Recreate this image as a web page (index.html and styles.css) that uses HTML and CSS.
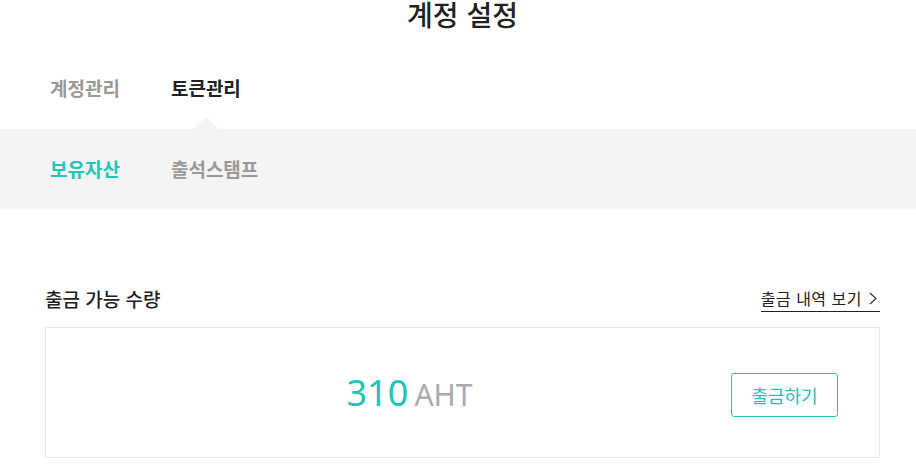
FILE: index.html
```
<!DOCTYPE html>
<html lang="ko">
<head>
    <meta charset="UTF-8">
    <meta name="viewport" content="width=device-width, initial-scale=1.0">
    <title>계정 설정</title>
    <link rel="stylesheet" href="styles.css">
</head>
<body>

<div class="container">
    <h1 class="page-title">계정 설정</h1>
    <ul class="tabs">
        <li class="tab">계정관리</li>
        <li class="tab active">토큰관리</li>
    </ul>
</div>

<div class="sub-band">
    <ul class="container sub-tabs">
        <li class="sub-tab active">보유자산</li>
        <li class="sub-tab">출석스탬프</li>
    </ul>
</div>

<div class="container section">
    <div class="section-head">
        <h2>출금 가능 수량</h2>
        <a class="history-link" href="#">출금 내역 보기
            <svg width="8" height="13" viewBox="0 0 8 13"><polyline points="1,1 7,6.5 1,12" fill="none" stroke="#333" stroke-width="1.2"/></svg>
        </a>
    </div>
    <div class="amount-box">
        <div class="amount"><span class="num">310</span> <span class="unit">AHT</span></div>
        <button class="withdraw-btn">출금하기</button>
    </div>
</div>

</body>
</html>
```

FILE: styles.css
```
body {
    margin: 0;
    font-family: "Noto Sans CJK KR", "Noto Sans", sans-serif;
    color: #222;
    background: #fff;
}

ul {
    list-style: none;
    margin: 0;
    padding: 0;
}

.container {
    width: 835px;
    margin: 0 36px 0 45px;
}

/* Title */
.page-title {
    margin: -3px 0 0;
    height: 34px;
    line-height: 34px;
    font-size: 28px;
    font-weight: 500;
    text-align: center;
    color: #222;
}

/* Main tabs */
.tabs {
    display: flex;
    gap: 51px;
    padding: 44px 0 28px 5px;
}

.tab {
    position: relative;
    line-height: 26px;
    font-size: 19px;
    font-weight: 700;
    color: #999;
}

.tab.active {
    color: #222;
}

.tab.active::after {
    content: "";
    position: absolute;
    left: 50%;
    top: 100%;
    margin: 16px 0 0 -13px;
    border-left: 13px solid transparent;
    border-right: 13px solid transparent;
    border-bottom: 12px solid #f4f4f4;
}

/* Sub tabs */
.sub-band {
    background: #f4f4f4;
}

.sub-tabs {
    display: flex;
    gap: 51px;
    padding-left: 5px;
    box-sizing: border-box;
}

.sub-tab {
    line-height: 80px;
    font-size: 19px;
    font-weight: 700;
    color: #999;
}

.sub-tab.active {
    color: #20c5b9;
}

/* Withdraw section */
.section {
    padding-top: 77px;
}

.section-head {
    display: flex;
    justify-content: space-between;
    align-items: flex-end;
}

.section-head h2 {
    margin: 0;
    line-height: 26px;
    font-size: 19px;
    font-weight: 500;
    color: #222;
}

.history-link {
    display: flex;
    align-items: center;
    gap: 7px;
    line-height: 25px;
    font-size: 16px;
    letter-spacing: 0.5px;
    color: #222;
    text-decoration: none;
    border-bottom: 1px solid #222;
    padding-right: 3px;
}

.amount-box {
    display: flex;
    align-items: center;
    height: 131px;
    margin-top: 15px;
    padding-right: 41px;
    border: 1px solid #e8e8e8;
    box-sizing: border-box;
}

.amount {
    flex: 1;
    padding-left: 42px;
    text-align: center;
    font-family: "Noto Sans", sans-serif;
}

.num {
    font-size: 36px;
    color: #20c5b9;
}

.unit {
    margin-left: 2px;
    font-size: 30px;
    color: #aaa;
}

.withdraw-btn {
    width: 107px;
    height: 44px;
    margin-top: 5px;
    border: 1px solid #20c5b9;
    border-radius: 3px;
    background: #fff;
    color: #20c5b9;
    font-size: 18px;
    font-family: "Noto Sans CJK KR", sans-serif;
    cursor: pointer;
}
```
